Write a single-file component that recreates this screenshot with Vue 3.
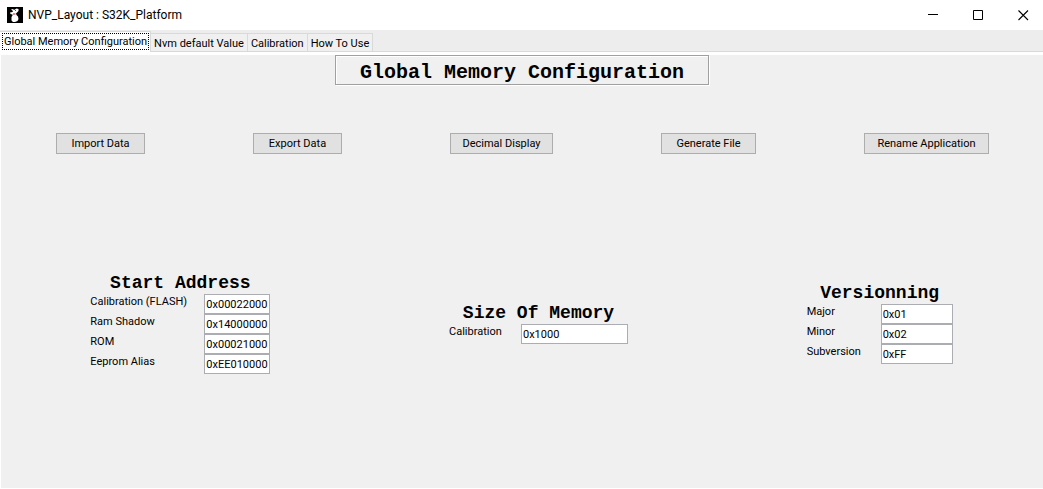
<script setup>
import { ref } from 'vue'

const tabs = ['Global Memory Configuration', 'Nvm default Value', 'Calibration', 'How To Use']
const active = ref(0)

const actions = [
  { label: 'Import Data', size: 'small' },
  { label: 'Export Data', size: 'small' },
  { label: 'Decimal Display', size: 'large' },
  { label: 'Generate File', size: 'medium' },
  { label: 'Rename Application', size: 'wide' },
]

const groups = ref([
  {
    id: 'address',
    title: 'Start Address',
    fields: [
      { label: 'Calibration (FLASH)', value: '0x00022000' },
      { label: 'Ram Shadow', value: '0x14000000' },
      { label: 'ROM', value: '0x00021000' },
      { label: 'Eeprom Alias', value: '0xEE010000' },
    ],
  },
  {
    id: 'size',
    title: 'Size Of Memory',
    fields: [{ label: 'Calibration', value: '0x1000' }],
  },
  {
    id: 'version',
    title: 'Versionning',
    fields: [
      { label: 'Major', value: '0x01' },
      { label: 'Minor', value: '0x02' },
      { label: 'Subversion', value: '0xFF' },
    ],
  },
])
</script>

<template>
  <div class="window">
    <header class="titlebar">
      <svg class="logo" width="16" height="16" viewBox="0 0 16 16" aria-hidden="true">
        <rect width="16" height="16" fill="#000" />
        <path d="M4 2.500L6 2L7 3L9.500 1.500L11.500 2V4L10 5.500L9 6.500L9.500 8L11 9.500L11.500 12L10.500 14L8 15H6L4.500 13.500V10L5.500 8.500V7.500L3.500 7L3 5.500L5.500 5L6 4Z" fill="#fff" />
        <path d="M6 6.500h2.500v1h-2.500z" fill="#c8102e" />
        <path d="M8 3h1v1h-1z" fill="#555" />
      </svg>
      <span class="title">NVP_Layout : S32K_Platform</span>
      <div class="controls">
        <button type="button" aria-label="Minimize">
          <svg width="11" height="11" viewBox="0 0 11 11"><path d="M0 4.500h10" stroke="#000" fill="none" /></svg>
        </button>
        <button type="button" aria-label="Maximize">
          <svg width="11" height="11" viewBox="0 0 11 11"><path d="M.5 .5h9v9h-9z" stroke="#000" fill="none" /></svg>
        </button>
        <button type="button" aria-label="Close">
          <svg width="11" height="11" viewBox="0 0 11 11"><path d="M.5 .5l9.500 9.500M10 .5l-9.500 9.500" stroke="#000" stroke-width="1.1" fill="none" /></svg>
        </button>
      </div>
    </header>

    <nav class="tabs" role="tablist">
      <button
        v-for="(tab, i) in tabs"
        :key="tab"
        type="button"
        role="tab"
        class="tab"
        :class="{ active: i === active }"
        :aria-selected="i === active"
        @click="active = i"
      >
        <span>{{ tab }}</span>
      </button>
    </nav>

    <main class="panel">
      <h1>Global Memory Configuration</h1>
      <div class="actions">
        <button v-for="a in actions" :key="a.label" type="button" :class="a.size">{{ a.label }}</button>
      </div>
      <div class="groups">
        <section v-for="g in groups" :key="g.id" class="group" :class="g.id">
          <h2>{{ g.title }}</h2>
          <div v-for="(f, i) in g.fields" :key="f.label" class="field">
            <label :for="g.id + i">{{ f.label }}</label>
            <input :id="g.id + i" v-model="f.value" type="text" />
          </div>
        </section>
      </div>
    </main>
  </div>
</template>

<style>
body {
  margin: 0;
  background: #fff;
}
</style>

<style scoped>
.window {
  display: flex;
  flex-direction: column;
  min-height: 100vh;
  box-sizing: border-box;
  padding-bottom: 1px;
  background: #fff;
  color: #000;
  font: 11px/14px Tahoma, Roboto, sans-serif;
}
button,
input {
  font: inherit;
  color: inherit;
  box-sizing: border-box;
  margin: 0;
  border-radius: 0;
}
button {
  white-space: nowrap;
}
.titlebar {
  display: flex;
  align-items: center;
  height: 30px;
  padding: 0 2px 0 7px;
  box-sizing: border-box;
}
.logo {
  display: block;
  margin-right: 5px;
}
.title {
  font: 12px/16px "Segoe UI", Roboto, sans-serif;
}
.controls {
  display: flex;
  gap: 10px;
  margin-left: auto;
}
.controls button {
  display: flex;
  align-items: center;
  justify-content: center;
  width: 35px;
  height: 28px;
  padding: 0;
  border: 0;
  background: none;
}
.tabs {
  display: flex;
  align-items: flex-end;
  height: 22px;
  box-sizing: border-box;
  background: #ededed;
  border-bottom: 1px solid #d9d9d9;
}
.tab {
  height: 18px;
  padding: 2px 3px 0;
  border: 1px solid #d9d9d9;
  border-width: 1px 1px 0 0;
  background: #f0f0f0;
}
.tab.active {
  height: 21px;
  margin-bottom: -1px;
  padding: 1px 1px 2px 2px;
  background: #fff;
}
.tab.active span {
  display: block;
  padding: 1px 1px 0;
  border: 1px dotted #000;
}
.panel {
  flex: 1;
  display: flex;
  flex-direction: column;
  margin: 3px 0 0 1px;
  background: #f0f0f0;
}
h1,
h2 {
  margin: 0;
  font-family: "Courier New", "Liberation Mono", monospace;
  font-weight: bold;
  white-space: nowrap;
}
h1 {
  align-self: center;
  box-sizing: border-box;
  height: 30px;
  padding: 4px 24px 0;
  border: 1px solid #a0a0a0;
  box-shadow: 1px 1px #fff, inset 1px 1px #fff;
  font-size: 20px;
  line-height: 26px;
}
.actions {
  display: flex;
  justify-content: space-around;
  margin-top: 48px;
  padding-left: 1px;
}
.actions button {
  height: 21px;
  padding: 0 4px;
  border: 1px solid #adadad;
  background: #e1e1e1;
}
.small {
  width: 89px;
}
.medium {
  width: 95px;
}
.large {
  width: 103px;
}
.wide {
  width: 125px;
}
.groups {
  flex: 1;
  display: flex;
  align-items: center;
  justify-content: space-around;
  padding: 4px 1px 0 0;
}
h2 {
  padding-top: 1px;
  padding-bottom: 1px;
  font-size: 18px;
  line-height: 20px;
  text-align: center;
}
.field {
  display: grid;
  height: 20px;
}
.field label {
  padding-top: 1px;
}
.address .field {
  grid-template-columns: 114px 66px;
}
.size .field {
  grid-template-columns: 72px 107px;
}
.version .field {
  grid-template-columns: 74px 72px;
}
.field input {
  width: 100%;
  height: 20px;
  padding: 0 1px;
  border: 1px solid #abadb3;
  background: #fff;
}
</style>
